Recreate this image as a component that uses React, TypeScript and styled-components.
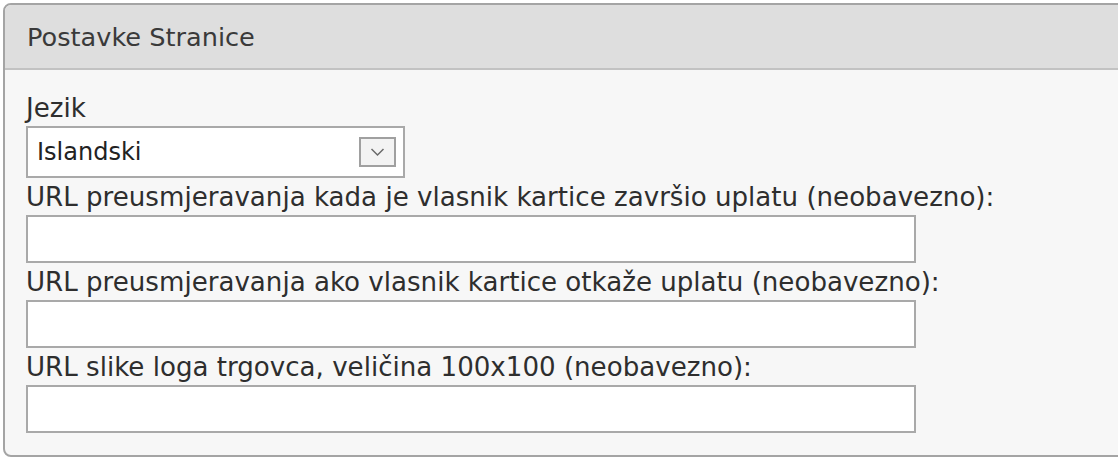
import React from 'react';
import styled, { createGlobalStyle } from 'styled-components';

const GlobalStyle = createGlobalStyle`
    html, body {
        margin: 0;
        padding: 0;
        background: #ffffff;
        overflow: hidden;
    }
    body {
        font-family: "DejaVu Sans", Verdana, sans-serif;
        color: #333333;
    }
`;

const Panel = styled.div`
    margin: 3px 0 0 3px;
    width: 1140px;
    height: 454px;
    box-sizing: border-box;
    border: 2px solid #a4a4a4;
    border-radius: 8px;
    background-color: #f7f7f7;
    overflow: hidden;
`;

const Header = styled.div`
    height: 65px;
    box-sizing: border-box;
    background-color: #dedede;
    border-bottom: 2px solid #c2c2c2;
    display: flex;
    align-items: center;
    padding-left: 22px;
    font-size: 25.6px;
    color: #3a3a3a;
`;

const Body = styled.div`
    padding: 19px 0 0 21px;
    display: flex;
    flex-direction: column;
    align-items: flex-start;
`;

const Label = styled.label`
    font-size: 26.1px;
    line-height: 35px;
    padding-top: 2px;
    height: 37px;
    box-sizing: border-box;
    display: block;
    color: #2e2e2e;
    white-space: nowrap;
`;

const SelectBox = styled.div`
    width: 379px;
    height: 52px;
    box-sizing: border-box;
    border: 2px solid #a9a9a9;
    background: #ffffff;
    display: flex;
    align-items: center;
    justify-content: space-between;
    padding: 0 7px 0 9px;
    font-size: 24px;
    color: #222;
`;

const DropButton = styled.div`
    width: 37px;
    height: 30px;
    box-sizing: border-box;
    border: 2px solid #a0a0a0;
    background: #f3f3f3;
    display: flex;
    align-items: center;
    justify-content: center;
`;

const TextInput = styled.input`
    width: 890px;
    height: 48px;
    box-sizing: border-box;
    border: 2px solid #a9a9a9;
    background: #ffffff;
    margin: 0;
    padding: 0 8px;
    font: inherit;
    font-size: 24px;
    outline: none;
`;

const fields = [
    'URL preusmjeravanja kada je vlasnik kartice završio uplatu (neobavezno):',
    'URL preusmjeravanja ako vlasnik kartice otkaže uplatu (neobavezno):',
    'URL slike loga trgovca, veličina 100x100 (neobavezno):',
];

const App: React.FC = () => {
    return (
        <>
            <GlobalStyle />
            <Panel>
                <Header>Postavke Stranice</Header>
                <Body>
                    <Label>Jezik</Label>
                    <SelectBox>
                        <span>Islandski</span>
                        <DropButton>
                            <svg width="15" height="10" viewBox="0 0 15 10">
                                <path d="M1.5 2 L7.5 8 L13.5 2" fill="none" stroke="#6a6a6a" strokeWidth="1.5" />
                            </svg>
                        </DropButton>
                    </SelectBox>
                    {fields.map((f) => (
                        <React.Fragment key={f}>
                            <Label>{f}</Label>
                            <TextInput type="text" />
                        </React.Fragment>
                    ))}
                </Body>
            </Panel>
        </>
    );
};

export default App;
